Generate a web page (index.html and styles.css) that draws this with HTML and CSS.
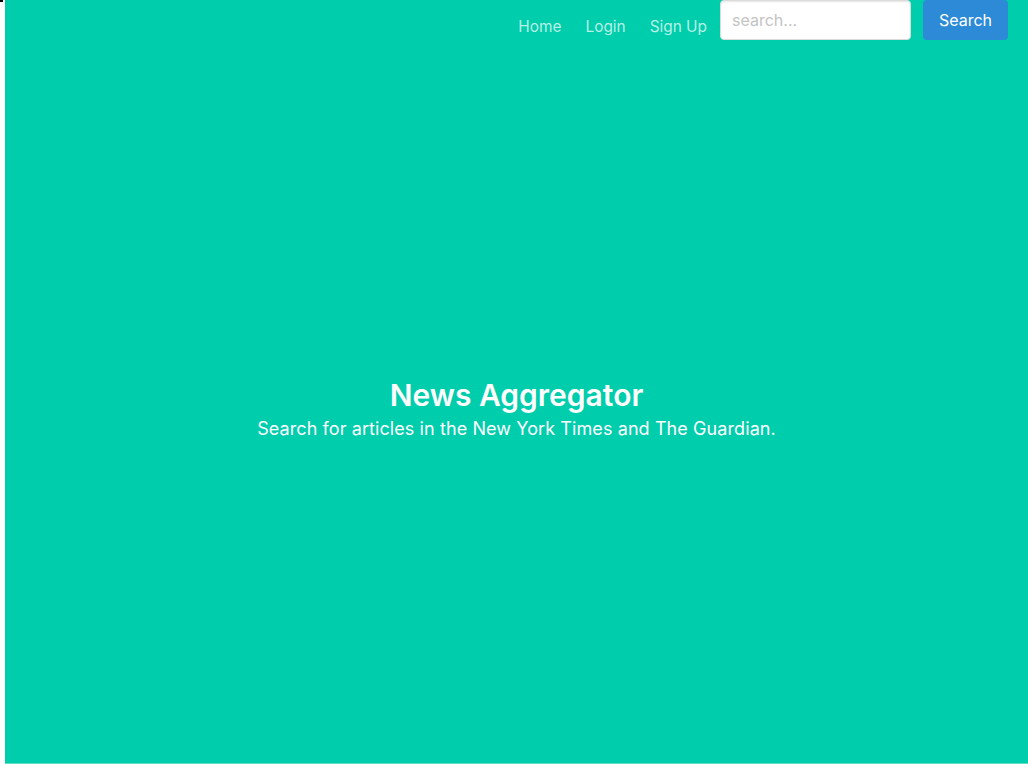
FILE: index.html
```html
<!DOCTYPE html>
<html lang="en">
<head>
<meta charset="utf-8">
<title>News Aggregator</title>
<link rel="stylesheet" href="styles.css">
</head>
<body>
<span class="corner-mark"></span>
<section class="hero">
  <nav class="navbar">
    <a class="nav-link" href="#">Home</a>
    <a class="nav-link" href="#">Login</a>
    <a class="nav-link" href="#">Sign Up</a>
    <form class="search-form">
      <input class="search-input" type="text" placeholder="search...">
      <button class="search-button" type="button">Search</button>
    </form>
  </nav>
  <div class="hero-body">
    <h1 class="title">News Aggregator</h1>
    <p class="subtitle">Search for articles in the New York Times and The Guardian.</p>
  </div>
</section>
</body>
</html>
```

FILE: styles.css
```css
html, body {
  margin: 0;
  padding: 0;
  background: #ffffff;
  height: 100%;
}

body {
  font-family: Inter, "Noto Sans", sans-serif;
  position: relative;
  overflow: hidden;
}

.corner-mark {
  position: absolute;
  top: 0;
  left: 0;
  width: 3px;
  height: 2px;
  background: #000;
}

.hero {
  margin-left: 5px;
  height: 763px;
  background: #00cdac;
  display: flex;
  flex-direction: column;
  border-bottom: 1px solid #5fdcc6;
}

.navbar {
  display: flex;
  justify-content: flex-end;
  align-items: flex-start;
  padding-right: 20px;
  height: 40px;
}

.nav-link {
  color: rgba(255, 255, 255, 0.72);
  text-decoration: none;
  font-size: 15.4px;
  line-height: 20px;
  padding: 17px 12px 0;
}

.search-form {
  display: flex;
  margin-left: 1px;
  gap: 12px;
}

.search-input {
  box-sizing: border-box;
  width: 191px;
  height: 40px;
  border: 1px solid #dbdbdb;
  border-radius: 4px;
  padding: 0 11px;
  font-family: inherit;
  font-size: 16px;
  color: #363636;
  background: #fff;
  box-shadow: inset 0 1px 2px rgba(10, 10, 10, 0.1);
  outline: none;
}

.search-input::placeholder {
  color: #c4c4c4;
}

.search-button {
  box-sizing: border-box;
  width: 85px;
  height: 40px;
  border: none;
  border-radius: 4px;
  background: #2d8ad6;
  color: #fff;
  font-family: inherit;
  font-size: 16px;
  padding: 0;
}

.hero-body {
  flex: 1;
  display: flex;
  flex-direction: column;
  align-items: center;
  justify-content: center;
  text-align: center;
  padding-top: 18px;
}

.title {
  margin: 0;
  color: #fff;
  font-size: 30px;
  font-weight: 600;
  line-height: 36px;
}

.subtitle {
  margin: 0;
  color: #fff;
  font-size: 18px;
  font-weight: 400;
  line-height: 32px;
  letter-spacing: 0.005em;
}
```
